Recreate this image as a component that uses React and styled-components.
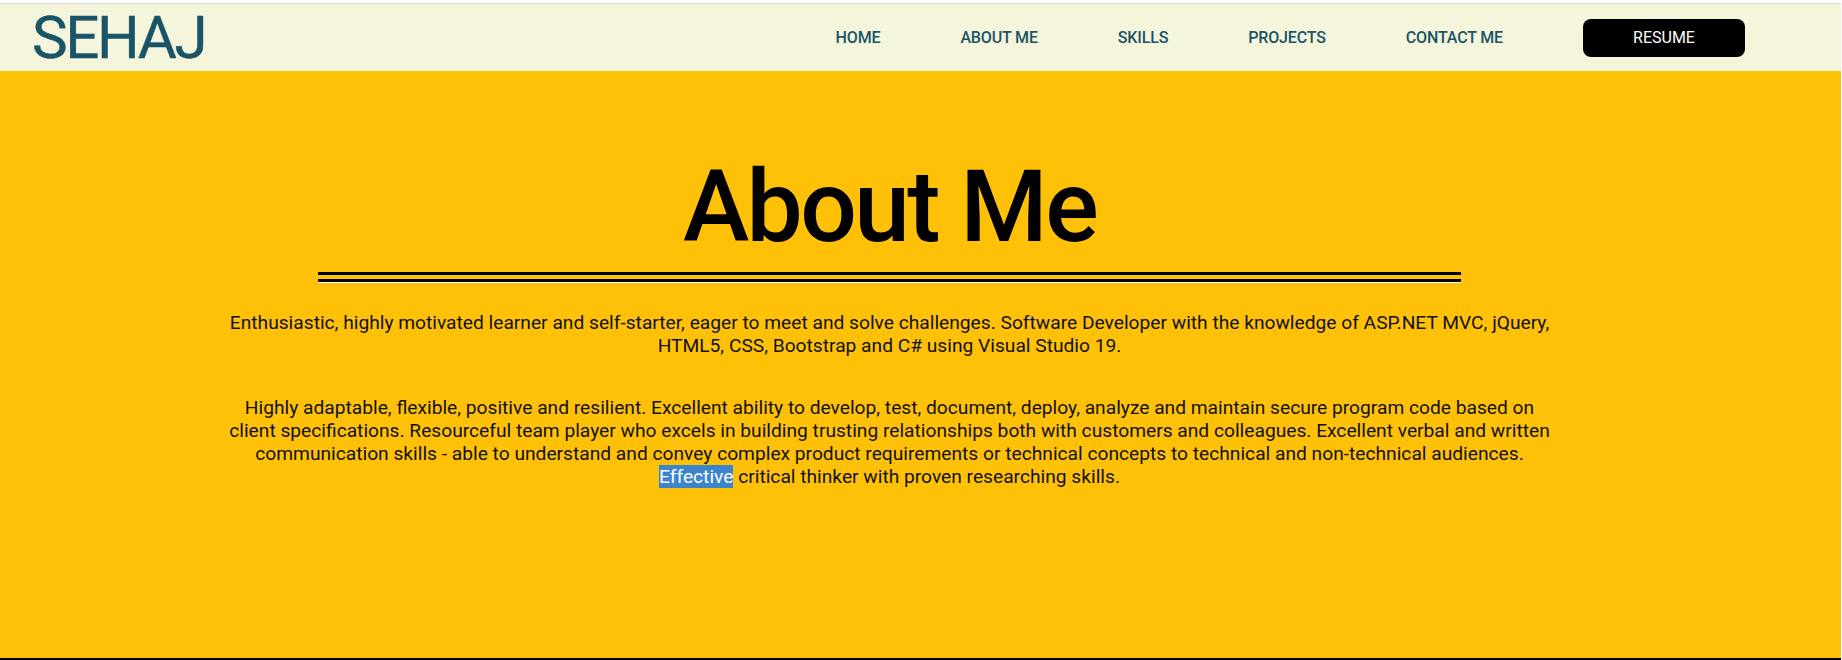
import React from "react";
import styled, { createGlobalStyle } from "styled-components";

const GlobalStyle = createGlobalStyle`
  html, body {
    margin: 0;
    padding: 0;
    background: #ffffff;
  }
  body {
    font-family: Roboto, "Noto Sans", "Liberation Sans", sans-serif;
  }
  * { box-sizing: border-box; }
`;

const Page = styled.div`
  margin-right: 1px;
  padding-top: 3px;
  display: flex;
  flex-direction: column;
  height: 660px;
`;

const Header = styled.header`
  display: flex;
  align-items: center;
  height: 68px;
  background: #f5f5dc;
  border-top: 1px solid #dcdcdc;
  padding: 0 96px 0 32px;
`;

const Logo = styled.div`
  font-size: 60px;
  font-weight: 400;
  color: #1a5467;
  line-height: 1;
  letter-spacing: -2.4px;
  -webkit-text-stroke: 0.4px #1a5467;
`;

const Nav = styled.nav`
  margin-left: auto;
  display: flex;
  align-items: center;
  gap: 80px;
`;

const NavLink = styled.a`
  font-size: 16px;
  font-weight: 500;
  color: #1a5467;
  text-decoration: none;
  text-transform: uppercase;
  letter-spacing: -0.15px;
`;

const ResumeButton = styled.button`
  width: 162px;
  height: 38px;
  border: none;
  border-radius: 8px;
  background: #000;
  color: #fff;
  font-family: inherit;
  font-size: 16px;
  font-weight: 400;
`;

const Section = styled.section`
  flex: 1;
  background: #ffc107;
  border-bottom: 2px solid #000;
  padding: 77px 62px 0 0;
  display: flex;
  flex-direction: column;
  align-items: center;
`;

const Title = styled.h1`
  margin: 0;
  font-size: 100px;
  font-weight: 500;
  line-height: 117px;
  color: #000;
  letter-spacing: -2.6px;
`;

const Divider = styled.div`
  width: 1143px;
  margin-top: 7px;
  height: 7px;
  border-top: 3px solid #000;
  border-bottom: 1px solid #fff;
  background: linear-gradient(#000, #000) bottom / 100% 3px no-repeat;
  box-sizing: content-box;
`;

const Text = styled.p`
  width: 1335px;
  margin: ${(p) => p.$top}px 0 0;
  font-size: 19.2px;
  line-height: 23px;
  text-align: center;
  color: #111;
`;

const Selected = styled.span`
  background: #3b85cc;
  color: #fff;
`;

export default function App() {
  return (
    <>
      <GlobalStyle />
      <Page>
        <Header>
          <Logo>SEHAJ</Logo>
          <Nav>
            <NavLink href="#home">Home</NavLink>
            <NavLink href="#about">About Me</NavLink>
            <NavLink href="#skills">Skills</NavLink>
            <NavLink href="#projects">Projects</NavLink>
            <NavLink href="#contact">Contact Me</NavLink>
            <ResumeButton>RESUME</ResumeButton>
          </Nav>
        </Header>
        <Section>
          <Title>About Me</Title>
          <Divider />
          <Text $top={28}>
            Enthusiastic, highly motivated learner and self-starter, eager to meet and solve challenges. Software Developer with the knowledge of ASP.NET MVC, jQuery, HTML5, CSS, Bootstrap and C# using Visual Studio 19.
          </Text>
          <Text $top={39}>
            Highly adaptable, flexible, positive and resilient. Excellent ability to develop, test, document, deploy, analyze and maintain secure program code based on client specifications. Resourceful team player who excels in building trusting relationships both with customers and colleagues. Excellent verbal and written communication skills - able to understand and convey complex product requirements or technical concepts to technical and non-technical audiences.{" "}
            <Selected>Effective</Selected> critical thinker with proven researching skills.
          </Text>
        </Section>
      </Page>
    </>
  );
}
